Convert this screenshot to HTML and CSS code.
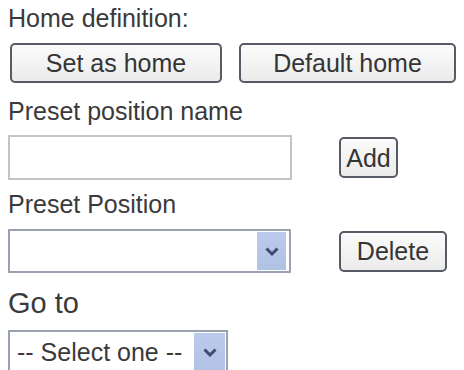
FILE: index.html
```html
<!DOCTYPE html>
<html>
<head>
<meta charset="utf-8">
<link rel="stylesheet" href="styles.css">
</head>
<body>
<div class="panel">
  <div class="label">Home definition:</div>
  <div class="row row-home">
    <button class="btn btn-set">Set as home</button>
    <button class="btn btn-default">Default home</button>
  </div>
  <div class="label label-gap">Preset position name</div>
  <div class="row row-name">
    <input class="text-input" type="text">
    <button class="btn btn-add">Add</button>
  </div>
  <div class="label label-gap2">Preset Position</div>
  <div class="row row-preset">
    <div class="select-wrap select-wide">
      <select class="select"><option></option></select>
      <span class="arrow"><svg width="14" height="9" viewBox="0 0 14 9"><path d="M1.5 1.5 L7 7 L12.5 1.5" fill="none" stroke="#3f4c72" stroke-width="3"/></svg></span>
    </div>
    <button class="btn btn-delete">Delete</button>
  </div>
  <div class="label label-big">Go to</div>
  <div class="row row-goto">
    <div class="select-wrap select-small">
      <select class="select"><option>-- Select one --</option></select>
      <span class="arrow arrow-small"><svg width="14" height="9" viewBox="0 0 14 9"><path d="M1.5 1.5 L7 7 L12.5 1.5" fill="none" stroke="#3f4c72" stroke-width="3"/></svg></span>
    </div>
  </div>
</div>
</body>
</html>
```
FILE: styles.css
```css
html, body {
  margin: 0;
  padding: 0;
  background: #ffffff;
  overflow: hidden;
}
.panel {
  display: flex;
  flex-direction: column;
  padding: 3px 8px 0 8px;
  font-family: "Liberation Sans", Arial, sans-serif;
  color: #3a3a3a;
}
.label {
  font-size: 25px;
  line-height: 30px;
  height: 30px;
}
.label-gap { margin-top: 13px; }
.label-gap2 { margin-top: 9px; }
.label-big {
  font-size: 29px;
  line-height: 34px;
  height: 34px;
  margin-top: 13px;
}
.row {
  display: flex;
  align-items: center;
}
.row-home { margin-top: 10px; padding-left: 2px; gap: 17px; }
.row-name { margin-top: 9px; gap: 47px; }
.row-preset { margin-top: 10px; gap: 48px; }
.row-goto { margin-top: 10px; }
.btn {
  appearance: none;
  -webkit-appearance: none;
  font-family: "Liberation Sans", Arial, sans-serif;
  font-size: 25px;
  color: #353535;
  border: 2px solid #565b66;
  border-radius: 5px;
  background: linear-gradient(#fbfbfb, #ebebeb);
  padding: 0;
  margin: 0;
  height: 40px;
  line-height: 36px;
  text-align: center;
}
.btn-set { width: 212px; }
.btn-default { width: 217px; }
.btn-add { width: 59px; height: 41px; }
.btn-delete { width: 108px; height: 41px; }
.text-input {
  appearance: none;
  width: 284px;
  height: 45px;
  box-sizing: border-box;
  border: 2px solid #c4c4c4;
  background: #fff;
  margin: 0;
  padding: 0;
}
.select-wrap {
  position: relative;
  height: 44px;
  box-sizing: border-box;
}
.select-wide { width: 283px; }
.select-small { width: 220px; }
.select {
  appearance: none;
  -webkit-appearance: none;
  width: 100%;
  height: 100%;
  box-sizing: border-box;
  border: 2px solid #9aa2b0;
  border-radius: 0;
  background: #fff;
  margin: 0;
  padding: 0 0 0 7px;
  font-family: "Liberation Sans", Arial, sans-serif;
  font-size: 25px;
  color: #3a3a3a;
}
.arrow {
  position: absolute;
  top: 3px;
  bottom: 3px;
  right: 5px;
  width: 29px;
  background: linear-gradient(#bccbeb, #b0c1e6);
  display: flex;
  align-items: center;
  justify-content: center;
}
.arrow-small {
  right: 3px;
  width: 31px;
}
```
